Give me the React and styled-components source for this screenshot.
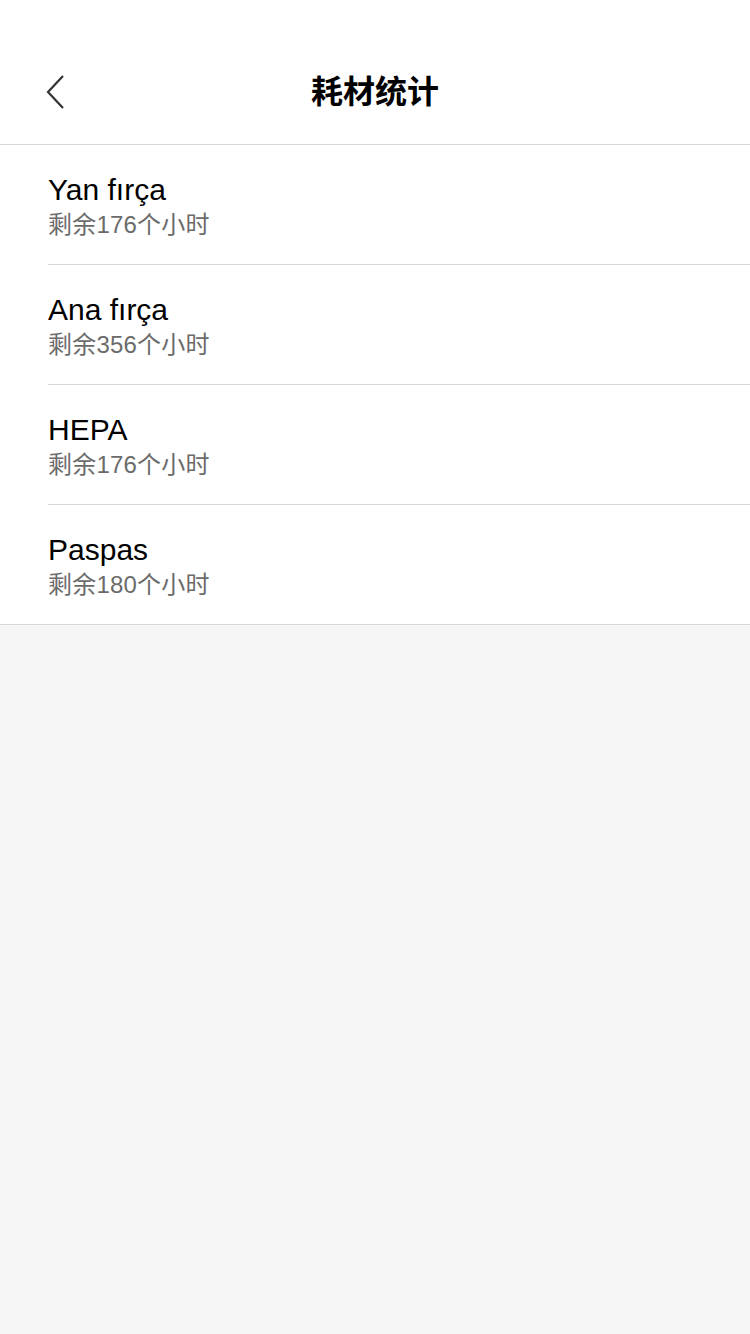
import React from "react";
import styled, { createGlobalStyle } from "styled-components";

const GlobalStyle = createGlobalStyle`
  html, body {
    margin: 0;
    padding: 0;
    background: #f6f6f6;
    font-family: "Liberation Sans", Arial, "Noto Sans CJK SC", sans-serif;
  }
`;

const Page = styled.div`
  min-height: 1334px;
  background: #f6f6f6;
`;

const Header = styled.header`
  background: #fff;
  padding-top: 40px;
  border-bottom: 1px solid #d8d8d8;
`;

const NavBar = styled.div`
  height: 104px;
  display: grid;
  grid-template-columns: 120px 1fr 120px;
  align-items: center;
`;

const BackButton = styled.button`
  border: none;
  background: none;
  padding: 0 0 1px 44px;
  height: 100%;
  display: flex;
  align-items: center;
  cursor: pointer;
`;

const Title = styled.h1`
  margin: 0 0 6px;
  text-align: center;
  font-size: 32px;
  font-weight: 700;
  color: #000;
  font-family: "Noto Sans CJK SC", sans-serif;
`;

const List = styled.ul`
  list-style: none;
  margin: 0;
  padding: 0 0 0 48px;
  background: #fff;
  border-bottom: 1px solid #d8d8d8;
`;

const Row = styled.li`
  box-sizing: border-box;
  height: ${(p) => (p.last ? "119px" : "120px")};
  padding-top: 4px;
  display: flex;
  flex-direction: column;
  justify-content: center;
  border-bottom: ${(p) => (p.last ? "none" : "1px solid #d8d8d8")};
`;

const Name = styled.div`
  font-size: 30px;
  line-height: 34px;
  color: #000;
`;

const Remain = styled.div`
  font-size: 24px;
  line-height: 32px;
  margin-top: 2px;
  color: #6b6b6b;
  letter-spacing: 0.2px;
  font-family: "Liberation Sans", Arial, "Noto Sans CJK SC", sans-serif;
`;

const items = [
  { name: "Yan fırça", hours: 176 },
  { name: "Ana fırça", hours: 356 },
  { name: "HEPA", hours: 176 },
  { name: "Paspas", hours: 180 },
];

const BackIcon = () => (
  <svg width="22" height="36" viewBox="0 0 22 36">
    <path d="M19 2 L4 18 L19 34" fill="none" stroke="#333" strokeWidth="2.2" />
  </svg>
);

export default function App() {
  return (
    <Page>
      <GlobalStyle />
      <Header>
        <NavBar>
          <BackButton aria-label="back">
            <BackIcon />
          </BackButton>
          <Title>耗材统计</Title>
          <div />
        </NavBar>
      </Header>
      <List>
        {items.map((it, i) => (
          <Row key={it.name} last={i === items.length - 1}>
            <Name>{it.name}</Name>
            <Remain>剩余{it.hours}个小时</Remain>
          </Row>
        ))}
      </List>
    </Page>
  );
}
